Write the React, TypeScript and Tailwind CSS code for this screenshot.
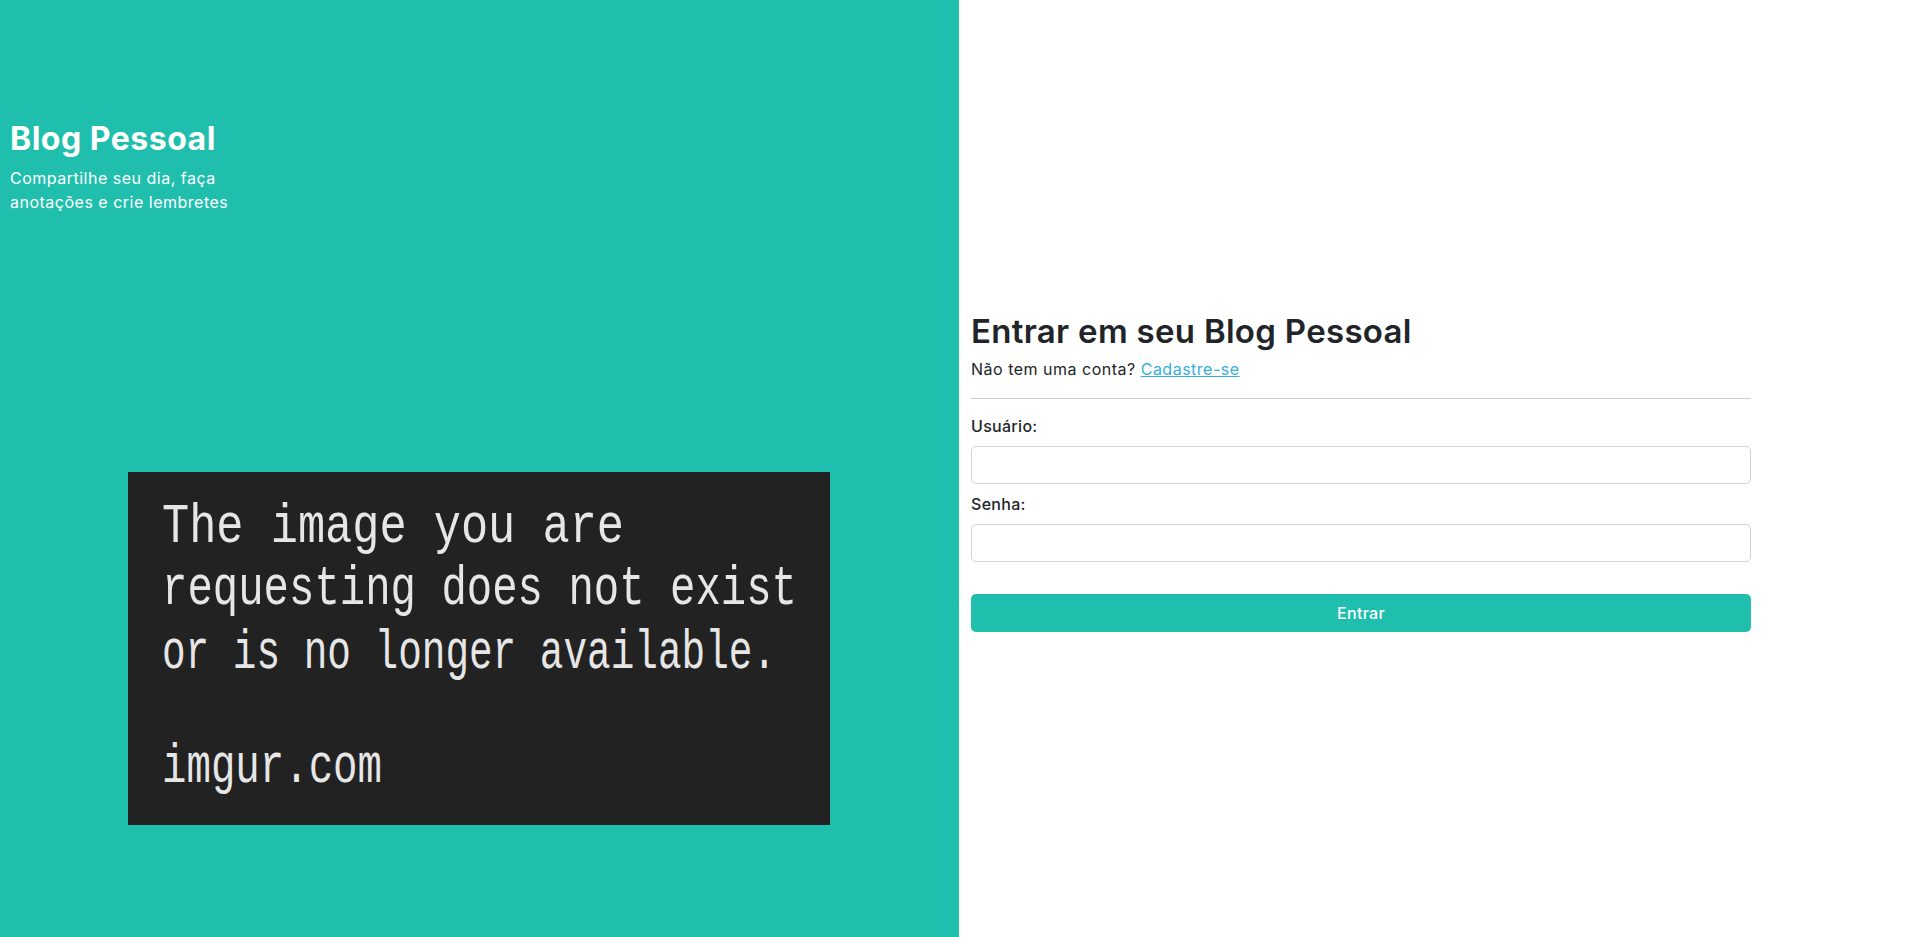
const heading = { fontFamily: "Inter, 'Noto Sans', sans-serif" };
const body = { fontFamily: "Inter, 'Noto Sans', sans-serif" };

function MissingImage() {
  const lines = [
    { text: "The image you are", y: 70, len: 462 },
    { text: "requesting does not exist", y: 132, len: 635 },
    { text: "or is no longer available.", y: 196, len: 614 },
    { text: "imgur.com", y: 310, len: 220 },
  ];
  return (
    <svg width="702" height="353" viewBox="0 0 702 353" className="block bg-[#222222]">
      {lines.map((l) => (
        <text
          key={l.text}
          x="0"
          y="0"
          transform={`translate(34 ${l.y}) scale(1 1.32)`}
          fill="#e6e6e6"
          fontSize="42"
          fontFamily="'Liberation Mono', 'DejaVu Sans Mono', monospace"
          textLength={l.len}
          lengthAdjust="spacingAndGlyphs"
        >
          {l.text}
        </text>
      ))}
    </svg>
  );
}

function Field({ label, type = "text" }: { label: string; type?: string }) {
  return (
    <div className="flex flex-col">
      <label className="mt-[10px] text-[16px] leading-5 font-medium tracking-[0.3px] text-[#212529]" style={body}>
        {label}
      </label>
      <input
        type={type}
        className="mt-[10px] h-[38px] w-full rounded-[5px] border border-[#ced4da] bg-white px-3 outline-none"
      />
    </div>
  );
}

export default function App() {
  return (
    <div className="flex h-[937px] w-full overflow-hidden bg-white">
      <div className="flex h-full w-[959px] shrink-0 flex-col bg-[#20bfad] pl-[10px] pt-[121px]">
        <h1 className="text-[32px] leading-9 font-bold tracking-[0.5px] text-white" style={heading}>
          Blog Pessoal
        </h1>
        <p className="mt-[9px] w-[240px] text-[16px] leading-6 tracking-[0.5px] text-white" style={body}>
          Compartilhe seu dia, faça anotações e crie lembretes
        </p>
        <div className="mt-[258px] ml-[118px]">
          <MissingImage />
        </div>
      </div>

      <div className="flex-1 pl-3 pt-[311px]">
        <div className="w-[780px]">
          <h2 className="text-[33px] leading-10 font-semibold tracking-[0.3px] text-[#212529]" style={heading}>
            Entrar em seu Blog Pessoal
          </h2>
          <p className="mt-[6px] text-[16px] leading-6 tracking-[0.5px] text-[#212529]" style={body}>
            Não tem uma conta?{" "}
            <a href="#" className="text-[#35aedb] underline">
              Cadastre-se
            </a>
          </p>
          <hr className="mt-[17px] border-t border-[#cdcdcd]" />
          <div className="mt-[7px]">
            <Field label="Usuário:" />
            <Field label="Senha:" type="password" />
          </div>
          <button
            className="mt-8 h-[38px] w-full rounded-[5px] bg-[#20bfad] text-[16px] font-medium tracking-[0.3px] text-white"
            style={heading}
          >
            Entrar
          </button>
        </div>
      </div>
    </div>
  );
}
